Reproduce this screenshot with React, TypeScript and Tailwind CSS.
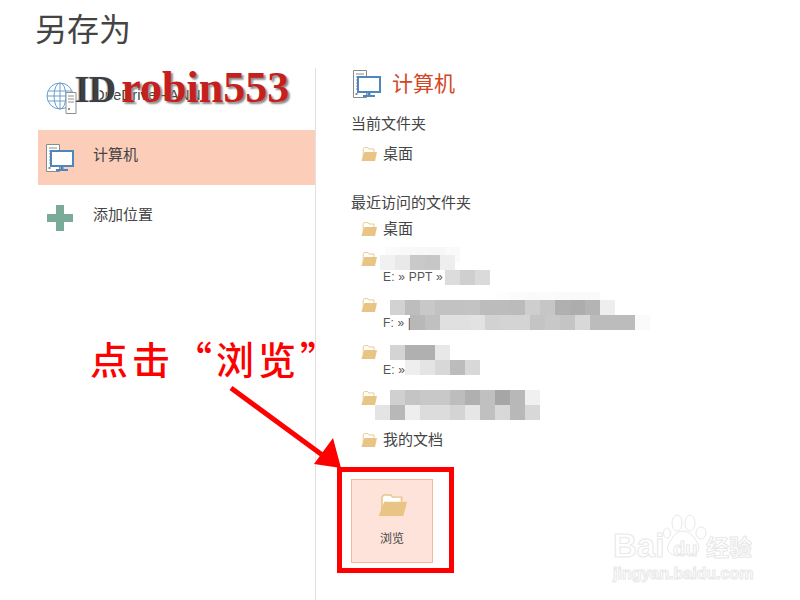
const cjk = "font-['Liberation_Sans','Noto_Sans_CJK_SC',sans-serif]";

type Patch = { x: number; y: number; cells: string[] };

// 打码的灰块，每格 15px
const patches: Patch[] = [
  { x: 385, y: 247, cells: ["#fbfbfb", "#f9f9f9", "#f8f8f8", "#f7f7f7", "#fafafa"] },
  { x: 380, y: 255, cells: ["#f1f1f1", "#e9e9e9", "#c9c9c9", "#c7c7c7", "#eeeeee"] },
  { x: 445, y: 270, cells: ["#dcdcdc", "#cfcfcf", "#dadada"] },
  { x: 495, y: 292, cells: ["#fdfdfd", "#fbfbfb", "#fafafa", "#fbfbfb", "#fafafa", "#fafafa", "#fafafa"] },
  { x: 390, y: 300, cells: ["#d2d2d2", "#bdbdbd", "#c8c8c8", "#c2c2c2", "#c2c2c2", "#c3c3c3", "#bcbcbc", "#bcbcbc", "#bbbbbb", "#cecece", "#c6c6c6", "#b0b0b0", "#adadad", "#b4b4b4", "#eeeeee"] },
  { x: 410, y: 315, cells: ["#b8b8b8", "#c0c0c0", "#e0e0e0", "#e0e0e0", "#e2e2e2", "#d2d2d2", "#d4d4d4", "#d4d4d4", "#c4c4c4", "#c8c8c8", "#c4c4c4", "#d8d8d8", "#bcbcbc", "#bcbcbc", "#bcbcbc", "#fafafa"] },
  { x: 390, y: 345, cells: ["#d4d4d4", "#b0b0b0", "#b0b0b0", "#e8e8e8"] },
  { x: 405, y: 360, cells: ["#eeeeee", "#e4e4e4", "#d8d8d8", "#bcbcbc", "#d8d8d8"] },
  { x: 390, y: 390, cells: ["#d0d0d0", "#c4c4c4", "#c8c8c8", "#c8c8c8", "#bdbdbd", "#b0b0b0", "#c0c0c0", "#a6a6a6", "#b8b8b8", "#f0f0f0"] },
  { x: 375, y: 405, cells: ["#e4e4e4", "#b8b8b8", "#eeeeee", "#dcdcdc", "#dcdcdc", "#d4d4d4", "#e6e6e6", "#c0c0c0", "#d8d8d8", "#b8b8b8", "#d8d8d8"] },
];

function Folder({ className }: { className: string }) {
  return (
    <svg viewBox="0 0 16 14" preserveAspectRatio="none" className={className}>
      <path d="M2.2 12.5V2L3.2.6H7l1 1.4h5v3" fill="#fff" stroke="#e9c585" strokeWidth="0.9" />
      <path d="M3.4 5H16l-2 9H.4z" fill="#e9c585" />
    </svg>
  );
}

function ComputerIcon({ className }: { className: string }) {
  return (
    <svg viewBox="0 0 28 28" className={className}>
      <path d="M.5.5h13v27H.5z" fill="#fff" stroke="#8a8a8a" />
      <path d="M3 4h8M3 7h8M3 10h3M3 13h3M3 16h3M3 19h3" stroke="#8a8a8a" />
      <rect x="2.5" y="23" width="2" height="2" fill="#8a8a8a" />
      <rect x="5" y="7" width="22" height="15" fill="#fff" stroke="#4f86bd" strokeWidth="2" />
      <path d="M14.5 22h3v3h-3zM10 25h12v2H10z" fill="#4f86bd" />
    </svg>
  );
}

function GlobeIcon({ className }: { className: string }) {
  return (
    <svg viewBox="0 0 32 32" className={className} fill="none">
      <g stroke="#6a9fd0" strokeWidth="1">
        <circle cx="14" cy="14" r="13" />
        <ellipse cx="14" cy="14" rx="6" ry="13" />
        <path d="M14 1v26M2 9h24M1 14h26M2 19h24" />
      </g>
      <path d="M20 10.5h10v21H20z" fill="#fff" stroke="#8f8f8f" />
      <path d="M22 14h6M22 17h6M22 20h6" stroke="#8f8f8f" />
      <rect x="22" y="26" width="2" height="2" fill="#8f8f8f" />
    </svg>
  );
}

function SideRow({ icon, label, active }: { icon: React.ReactNode; label: string; active?: boolean }) {
  return (
    <div className={`flex h-[55px] items-center ${active ? "bg-[#fccdb8]" : ""}`}>
      <div className="ml-[8px] w-[47px]">{icon}</div>
      <span className="mb-[5px] text-[15px] leading-[20px] text-[#444]">{label}</span>
    </div>
  );
}

function FolderRow({ name, path, className }: { name: string; path?: string; className?: string }) {
  return (
    <div className={`ml-[10px] ${className ?? ""}`}>
      <div className="flex h-[20px] items-center">
        <Folder className="mr-[6px] h-[14px] w-[16px]" />
        <span className="text-[15px] leading-[20px] text-[#444]">{name}</span>
      </div>
      {path && <div className="ml-[22px] h-[16px] text-[12px] leading-[16px] tracking-[0.2px] text-[#555]">{path}</div>}
    </div>
  );
}

export default function App() {
  return (
    <div className={`relative h-[600px] w-[800px] overflow-hidden bg-white ${cjk}`}>
      <h1 className="ml-[35px] h-[68px] pt-[8px] text-[32px] leading-[44px] font-normal text-[#444]">另存为</h1>

      <div className="flex">
        <div className="ml-[38px] box-content h-[532px] w-[277px] border-r border-[#e1e1e1]">
          <div className="h-[62px] pt-[2px]">
            <SideRow icon={<GlobeIcon className="h-[32px] w-[32px]" />} label="OneDrive - ANN" />
          </div>
          <SideRow active icon={<ComputerIcon className="h-[28px] w-[28px]" />} label="计算机" />
          <div className="mt-[5px]">
            <SideRow
              icon={
                <div className="relative ml-[1px] h-[26px] w-[26px]">
                  <div className="absolute top-0 left-[9px] h-[26px] w-[8px] bg-[#7aab98]" />
                  <div className="absolute top-[9px] left-0 h-[8px] w-[26px] bg-[#7aab98]" />
                </div>
              }
              label="添加位置"
            />
          </div>
        </div>

        <div className="ml-[35px] flex-1">
          <div className="mt-[2px] flex h-[28px] items-center">
            <ComputerIcon className="ml-[2px] h-[28px] w-[28px]" />
            <span className="ml-[11px] text-[21px] text-[#d24726]">计算机</span>
          </div>
          <div className="mt-[16px] h-[20px] text-[15px] leading-[20px] text-[#444]">当前文件夹</div>
          <FolderRow name="桌面" className="mt-[10px]" />
          <div className="mt-[29px] h-[20px] text-[15px] leading-[20px] text-[#444]">最近访问的文件夹</div>
          <FolderRow name="桌面" className="mt-[6px]" />
          <FolderRow name=" " path="E: » PPT » [" className="mt-[10px]" />
          <FolderRow name=" " path="F: » [" className="mt-[10px]" />
          <FolderRow name=" " path="E: » F" className="mt-[11px]" />
          <FolderRow name=" " className="mt-[10px]" />
          <FolderRow name="我的文档" className="mt-[22px]" />
          <div className="mt-[29px] flex h-[84px] w-[82px] flex-col items-center border border-[#f5b99b] bg-[#fde3d9]">
            <Folder className="mt-[14px] h-[22px] w-[29px]" />
            <span className="mt-[14px] text-[12px] text-[#444]">浏览</span>
          </div>
        </div>
      </div>

      {/* 打码 */}
      {patches.map((p) => (
        <div key={`${p.x}-${p.y}`} className="absolute flex h-[15px]" style={{ left: p.x, top: p.y }}>
          {p.cells.map((c, i) => (
            <div key={i} className="h-[15px] w-[15px]" style={{ background: c }} />
          ))}
        </div>
      ))}

      {/* 水印 ID */}
      <div className="absolute top-[63px] left-[75px] font-['Liberation_Serif','Noto_Sans_CJK_SC',serif] text-[44px] leading-[50px] font-bold whitespace-nowrap">
        <span className="text-[38px] tracking-[-1px] text-black/75 [text-shadow:1px_0_0_#fff,-1px_0_1px_#999]">ID</span>
        <span className="ml-[6px] text-[#c4201e] [text-shadow:2px_2px_2px_#888]">robin553</span>
      </div>

      {/* 标注 */}
      <div className="absolute top-[333px] left-[90px] font-['Noto_Sans_CJK_SC',serif] text-[38px] leading-[50px] font-medium tracking-[4px] whitespace-nowrap text-[#fe0000]">
        点击“浏览”
      </div>
      <svg className="absolute top-[380px] left-[225px] h-[95px] w-[125px]" viewBox="0 0 125 95">
        <path d="M6 8 100 77" stroke="#fe0000" strokeWidth="5" />
        <path d="M116 88 89 84 108 58z" fill="#fe0000" />
      </svg>
      <div className="absolute top-[467px] left-[337px] h-[106px] w-[117px] border-[5px] border-[#fe0000]" />

      {/* 百度经验水印 */}
      <div className="absolute top-[514px] left-[613px] h-[76px] w-[150px] text-transparent [-webkit-text-stroke:1px_#e8e8e8]">
        <svg viewBox="0 0 46 46" className="absolute top-0 left-[50px] h-[46px] w-[46px]" fill="#fff" stroke="#e8e8e8">
          <ellipse cx="14" cy="9" rx="5" ry="8" />
          <ellipse cx="27" cy="9" rx="5" ry="8" />
          <ellipse cx="38" cy="19" rx="5" ry="6" />
          <ellipse cx="4" cy="19" rx="3.5" ry="5" />
          <path d="M20 17c8 0 12 8 15 13 3 7-3 12-9 11-4-1-8-1-12 0-6 1-11-4-9-10 3-5 7-14 15-14z" />
        </svg>
        <span className="absolute top-[14px] left-0 font-['Liberation_Sans'] text-[33px] leading-[36px] font-bold">Bai</span>
        <span className="absolute top-[25px] left-[60px] font-['Liberation_Sans'] text-[20px] leading-[20px] font-bold">du</span>
        <span className="absolute top-[20px] left-[93px] text-[23px] leading-[28px] font-bold whitespace-nowrap">经验</span>
        <span className="absolute top-[49px] left-0 font-['Liberation_Sans'] text-[16px] leading-[22px] font-bold whitespace-nowrap">jingyan.baidu.com</span>
      </div>
    </div>
  );
}
